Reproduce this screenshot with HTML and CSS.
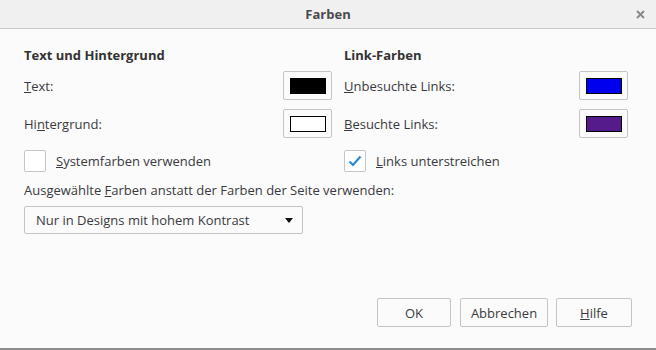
FILE: index.html
```html
<!DOCTYPE html>
<html lang="de">
<head>
    <meta charset="UTF-8">
    <title>Farben</title>
    <link rel="stylesheet" href="styles.css">
</head>
<body>
    <div class="dialog">
        <div class="titlebar">
            <span class="title">Farben</span>
            <svg class="close" width="9" height="9" viewBox="0 0 9 9">
                <path d="M1 1 L8 8 M8 1 L1 8" stroke="#8a8a8e" stroke-width="2" fill="none"/>
            </svg>
        </div>

        <div class="content">
            <div class="columns">
                <div class="column left">
                    <h2>Text und Hintergrund</h2>
                    <div class="row">
                        <span><u>T</u>ext:</span>
                        <button class="swatch-btn"><span class="swatch black"></span></button>
                    </div>
                    <div class="row">
                        <span>Hi<u>n</u>tergrund:</span>
                        <button class="swatch-btn"><span class="swatch white"></span></button>
                    </div>
                    <label class="check">
                        <span class="box"></span>
                        <span><u>S</u>ystemfarben verwenden</span>
                    </label>
                </div>
                <div class="column right">
                    <h2>Link-Farben</h2>
                    <div class="row">
                        <span><u>U</u>nbesuchte Links:</span>
                        <button class="swatch-btn"><span class="swatch blue"></span></button>
                    </div>
                    <div class="row">
                        <span><u>B</u>esuchte Links:</span>
                        <button class="swatch-btn"><span class="swatch purple"></span></button>
                    </div>
                    <label class="check">
                        <span class="box">
                            <svg width="14" height="12" viewBox="0 0 14 12">
                                <path d="M1.5 6.5 L5 10 L12.5 1.5" stroke="#2b8ad8" stroke-width="2.2" fill="none"/>
                            </svg>
                        </span>
                        <span><u>L</u>inks unterstreichen</span>
                    </label>
                </div>
            </div>

            <p class="caption">Ausgewählte <u>F</u>arben anstatt der Farben der Seite verwenden:</p>
            <div class="select">
                <span>Nur in Designs mit hohem Kontrast</span>
                <span class="arrow"></span>
            </div>
        </div>

        <div class="footer">
            <button class="btn ok">OK</button>
            <button class="btn">Abbrechen</button>
            <button class="btn help"><u>H</u>ilfe</button>
        </div>
    </div>
</body>
</html>
```

FILE: styles.css
```css
* {
    margin: 0;
    padding: 0;
    box-sizing: border-box;
}

body {
    font-family: 'Open Sans', 'Liberation Sans', sans-serif;
    font-size: 13px;
    color: #3a3a3e;
    background: #fbfbfb;
}

.dialog {
    width: 656px;
    height: 350px;
    display: flex;
    flex-direction: column;
    background: #fbfbfb;
    border-bottom: 2px solid #8c8c8c;
}

.titlebar {
    height: 29px;
    background: #f0f0f0;
    border-bottom: 1px solid #c9c9c9;
    display: flex;
    align-items: center;
    justify-content: center;
    position: relative;
}

.title {
    font-weight: bold;
    font-size: 13px;
    color: #4a4a4f;
}

.close {
    position: absolute;
    right: 11px;
    top: 10px;
}

.content {
    padding: 17px 24px 0;
}

.columns {
    display: grid;
    grid-template-columns: 308px 284px;
    column-gap: 12px;
}

h2 {
    font-size: 13px;
    font-weight: bold;
    color: #333;
    line-height: 18px;
    margin-bottom: 7px;
}

.row {
    display: flex;
    justify-content: space-between;
    align-items: center;
    height: 29px;
    margin-bottom: 9px;
}

.swatch-btn {
    width: 49px;
    height: 29px;
    border: 1px solid #c5c5c5;
    border-radius: 2px;
    background: #fbfbfb;
    display: flex;
    align-items: center;
    justify-content: center;
}

.swatch {
    display: block;
    width: 36px;
    height: 16px;
    border: 1px solid #000;
}

.black { background: #000; }
.white { background: #fff; }
.blue { background: #0000ee; }
.purple { background: #551a8b; }

.check {
    display: flex;
    align-items: center;
    gap: 10px;
    margin-top: 12px;
}

.box {
    width: 22px;
    height: 22px;
    border: 1px solid #c5c5c5;
    border-radius: 2px;
    background: #fff;
    display: flex;
    align-items: center;
    justify-content: center;
}

.caption {
    margin-top: 9px;
    line-height: 18px;
}

.select {
    margin-top: 7px;
    width: 279px;
    height: 28px;
    border: 1px solid #c5c5c5;
    border-radius: 2px;
    background: #fbfbfb;
    display: flex;
    align-items: center;
    justify-content: space-between;
    padding: 0 9px 0 11px;
}

.arrow {
    width: 0;
    height: 0;
    border-left: 4.5px solid transparent;
    border-right: 4.5px solid transparent;
    border-top: 5px solid #111;
}

.footer {
    margin-top: auto;
    display: flex;
    justify-content: flex-end;
    gap: 9px;
    padding: 0 24px 21px 0;
}

.btn {
    font-family: inherit;
    font-size: 13px;
    color: #3a3a3e;
    height: 29px;
    width: 74px;
    border: 1px solid #c5c5c5;
    border-radius: 2px;
    background: #fbfbfb;
}

.btn + .btn {
    width: 88px;
}

.btn.help {
    width: 76px;
    margin-left: -1px;
}
```
